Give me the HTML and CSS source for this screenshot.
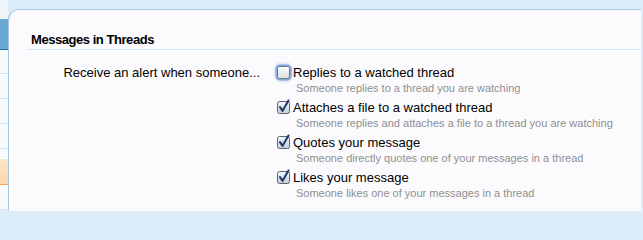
FILE: index.html
```html
<!DOCTYPE html>
<html>
<head>
<meta charset="utf-8">
<link rel="stylesheet" href="styles.css">
</head>
<body>
<div class="page">
  <nav class="sidebar">
    <div class="side-item side-top"></div>
    <div class="side-item side-active"></div>
    <div class="side-item h24"></div>
    <div class="side-item h25"></div>
    <div class="side-item h25"></div>
    <div class="side-item h25"></div>
    <div class="side-gap"></div>
    <div class="side-item side-orange"></div>
    <div class="side-item h25"></div>
  </nav>
  <main class="panel">
    <h3 class="heading">Messages in Threads</h3>
    <dl class="ctrl">
      <dt class="ctrl-label">Receive an alert when someone...</dt>
      <dd class="ctrl-input">
        <ul class="options">
          <li class="option">
            <label class="opt-line">
              <span class="box box-focus">
                <svg width="13" height="13" viewBox="0 0 13 13"><defs><linearGradient id="g1" x1="0" y1="0" x2="0" y2="1"><stop offset="0" stop-color="#ffffff"/><stop offset="1" stop-color="#d9dbe0"/></linearGradient></defs><rect x="0.5" y="0.5" width="12" height="12" rx="2" fill="url(#g1)" stroke="#6f7683"/></svg>
              </span>
              <span class="opt-text">Replies to a watched thread</span>
            </label>
            <p class="hint">Someone replies to a thread you are watching</p>
          </li>
          <li class="option">
            <label class="opt-line">
              <span class="box">
                <svg width="13" height="13" viewBox="0 0 13 13" overflow="visible"><defs><linearGradient id="g2" x1="0" y1="0" x2="0" y2="1"><stop offset="0" stop-color="#f4f6fa"/><stop offset="1" stop-color="#c9ced8"/></linearGradient></defs><rect x="0.5" y="0.5" width="12" height="12" rx="2" fill="url(#g2)" stroke="#5c6370"/><path d="M3 6.2 L5.6 9.8 L11.5 -0.5" fill="none" stroke="#1f3e6c" stroke-width="2.1" stroke-linecap="round" stroke-linejoin="round"/></svg>
              </span>
              <span class="opt-text">Attaches a file to a watched thread</span>
            </label>
            <p class="hint">Someone replies and attaches a file to a thread you are watching</p>
          </li>
          <li class="option">
            <label class="opt-line">
              <span class="box">
                <svg width="13" height="13" viewBox="0 0 13 13" overflow="visible"><rect x="0.5" y="0.5" width="12" height="12" rx="2" fill="url(#g2)" stroke="#5c6370"/><path d="M3 6.2 L5.6 9.8 L11.5 -0.5" fill="none" stroke="#1f3e6c" stroke-width="2.1" stroke-linecap="round" stroke-linejoin="round"/></svg>
              </span>
              <span class="opt-text">Quotes your message</span>
            </label>
            <p class="hint">Someone directly quotes one of your messages in a thread</p>
          </li>
          <li class="option">
            <label class="opt-line">
              <span class="box">
                <svg width="13" height="13" viewBox="0 0 13 13" overflow="visible"><rect x="0.5" y="0.5" width="12" height="12" rx="2" fill="url(#g2)" stroke="#5c6370"/><path d="M3 6.2 L5.6 9.8 L11.5 -0.5" fill="none" stroke="#1f3e6c" stroke-width="2.1" stroke-linecap="round" stroke-linejoin="round"/></svg>
              </span>
              <span class="opt-text">Likes your message</span>
            </label>
            <p class="hint">Someone likes one of your messages in a thread</p>
          </li>
        </ul>
      </dd>
    </dl>
  </main>
</div>
</body>
</html>
```

FILE: styles.css
```css
html, body {
  margin: 0;
  padding: 0;
}
body {
  background: #dcedf9;
  font-family: "Liberation Sans", Arial, sans-serif;
  font-size: 13px;
  color: #000;
  width: 643px;
  height: 213px;
  overflow: hidden;
}
.page {
  display: flex;
  height: 211px;
}
.sidebar {
  width: 8px;
  flex: none;
  display: flex;
  flex-direction: column;
}
.side-item {
  background: #f7fbfe;
  border-bottom: 1px solid #cfe3f3;
}
.side-top {
  height: 19px;
  border-bottom: 0;
  background: #eef6fc;
}
.side-active {
  height: 30px;
  background: #6ba8d6;
  border-bottom: 1px solid #2f6fa5;
}
.h24 { height: 23px; }
.h25 { height: 24px; }
.side-gap {
  height: 10px;
  background: #f7fbfe;
}
.side-orange {
  height: 25px;
  background: linear-gradient(#fbe5c8, #fcd8ad);
  border-bottom: 1px solid #f6a94d;
}
.panel {
  flex: 1;
  margin-top: 9px;
  margin-right: 2px;
  background: #fbfbfe;
  border-top: 1px solid #a9cae2;
  border-left: 1px solid #a5c6df;
  border-top-left-radius: 11px;
  min-width: 0;
}
.heading {
  margin: 0 0 0 17px;
  padding: 21px 0 1px 5px;
  font-size: 13px;
  line-height: 17px;
  font-weight: bold;
  letter-spacing: -0.45px;
  color: #000;
  border-bottom: 1px solid #d5e8f7;
}
.ctrl {
  display: flex;
  margin: 0;
  padding-top: 14px;
}
.ctrl-label {
  width: 251px;
  flex: none;
  text-align: right;
  line-height: 17px;
  color: #000;
}
.ctrl-input {
  margin: 0 0 0 17px;
}
.options {
  list-style: none;
  margin: 0;
  padding: 0;
  display: flex;
  flex-direction: column;
  gap: 4px;
}
.opt-line {
  display: flex;
  align-items: center;
  gap: 3px;
  line-height: 17px;
  height: 17px;
}
.box {
  width: 13px;
  height: 13px;
  display: block;
  flex: none;
}
.box svg {
  display: block;
}
.box-focus {
  border-radius: 3px;
  box-shadow: 0 0 0 1.5px rgba(120, 160, 215, 0.85), 0 0 3px 2px rgba(120, 160, 215, 0.5);
}
.hint {
  margin: 0;
  padding-left: 19px;
  font-size: 11px;
  line-height: 14px;
  color: #8f8f8f;
}
```
